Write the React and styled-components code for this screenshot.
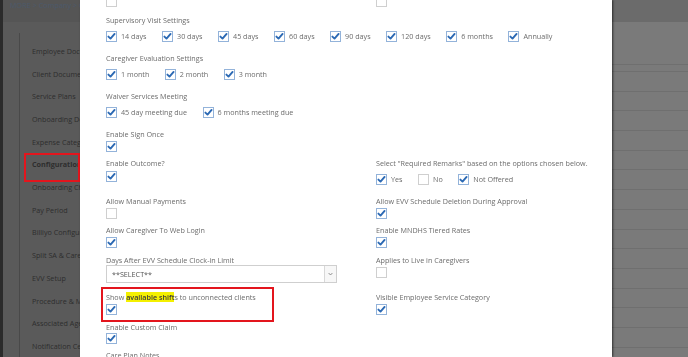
import React from "react";
import styled, { createGlobalStyle } from "styled-components";

const GlobalStyle = createGlobalStyle`
  html, body {
    margin: 0;
    padding: 0;
    width: 688px;
    height: 357px;
    overflow: hidden;
    font-family: "Open Sans", "Liberation Sans", sans-serif;
  }
`;

// background page (dimmed by the overlay)

const Page = styled.div`
  display: flex;
  width: 688px;
  height: 357px;
  overflow: hidden;
`;

const Rail = styled.div`
  width: 3px;
  flex-shrink: 0;
  background-color: #565656;
`;

const SideColumn = styled.div`
  width: 300px;
  flex-shrink: 0;
  display: flex;
  flex-direction: column;
  background-color: #b4b4b4;
`;

const Breadcrumb = styled.div`
  height: 22px;
  flex-shrink: 0;
  padding-left: 7px;
  background-color: #aaaaaa;
  font-size: 7.3px;
  line-height: 10px;
  color: #98b2d4;
`;

const SideNav = styled.nav`
  margin-top: 11px;
  margin-left: 16px;
  flex: 1;
  border-left: 1px solid #929292;
  padding-top: 6.6px;
  display: flex;
  flex-direction: column;
`;

const NavItem = styled.div`
  position: relative;
  height: 22.7px;
  display: flex;
  align-items: center;
  padding-left: 12px;
  font-size: 7.2px;
  color: #5c5c5c;
  font-weight: ${(p) => (p.$active ? 700 : 400)};
  white-space: nowrap;

  ${(p) =>
    p.$marked &&
    `
    &::after {
      content: "";
      position: absolute;
      z-index: 20;
      left: 4px;
      top: 0;
      width: 52px;
      height: 25px;
      border: 2px solid #e3151d;
    }
  `}
`;

const ContentColumn = styled.div`
  flex: 1;
  display: flex;
  flex-direction: column;
  background-color: #f4f4f4;
`;

const TopBand = styled.div`
  height: 22px;
  flex-shrink: 0;
  background-color: #d6d6d6;
`;

const TableRow = styled.div`
  height: ${(p) => p.$h}px;
  flex-shrink: 0;
  border-bottom: 1px solid #dedede;
  box-sizing: border-box;
`;

const Overlay = styled.div`
  position: fixed;
  inset: 0;
  z-index: 10;
  background-color: rgba(0, 0, 0, 0.5);
`;

// modal

const Modal = styled.div`
  position: fixed;
  z-index: 30;
  top: 0;
  bottom: 0;
  left: 80px;
  width: 532px;
  background-color: #fff;
  box-shadow: 1px 0 2px rgba(0, 0, 0, 0.6);
  overflow: hidden;
`;

const ModalBody = styled.div`
  display: flex;
  flex-direction: column;
  padding-left: 26px;
`;

const Label = styled.div`
  font-size: 7.2px;
  line-height: 10px;
  height: 10px;
  color: #6c6c6c;
  white-space: nowrap;
`;

const Highlight = styled.span`
  background-color: #f4f000;
  color: #3a3a3a;
  font-weight: 600;
`;

const Section = styled.div`
  display: flex;
  flex-direction: column;
  margin-top: ${(p) => p.$mt}px;
`;

const PairRow = styled.div`
  display: grid;
  grid-template-columns: 270px 1fr;
  align-items: start;
  margin-top: ${(p) => p.$mt}px;
`;

const Field = styled.div`
  position: relative;
  display: flex;
  flex-direction: column;
  align-items: flex-start;

  ${(p) =>
    p.$marked &&
    `
    &::after {
      content: "";
      position: absolute;
      left: -5.5px;
      top: -5px;
      width: 169px;
      height: 31px;
      border: 2px solid #e3151d;
    }
  `}
`;

const CheckRow = styled.div`
  display: flex;
  align-items: center;
  gap: 15.5px;
  margin-top: ${(p) => (p.$mt !== undefined ? p.$mt : 5.5)}px;
`;

const CheckItem = styled.label`
  display: inline-flex;
  align-items: center;
  gap: 4px;
  font-size: 7.2px;
  line-height: 11px;
  color: #6c6c6c;
  white-space: nowrap;
`;

const BoxFrame = styled.span`
  display: inline-flex;
  width: 11px;
  height: 11px;
  box-sizing: border-box;
  flex-shrink: 0;
  border: 1px solid ${(p) => (p.$checked ? "#93b3da" : "#cfcfcf")};
  background-color: #fff;
  margin-top: ${(p) => p.$mt || 0}px;
  svg {
    display: block;
  }
`;

const SelectBox = styled.div`
  width: 231px;
  height: 18px;
  box-sizing: border-box;
  border: 1px solid #cfcfcf;
  display: flex;
  align-items: center;
`;

const SelectText = styled.div`
  flex: 1;
  padding-left: 5px;
  font-size: 7.2px;
  color: #555;
`;

const SelectArrow = styled.div`
  width: 11px;
  height: 100%;
  border-left: 1px solid #d8d8d8;
  background-color: #f7f7f7;
  display: flex;
  align-items: center;
  justify-content: center;
`;

const Box = ({ checked, mt }) => (
  <BoxFrame $checked={checked} $mt={mt}>
    {checked && (
      <svg width="9" height="9" viewBox="0 0 9 9">
        <path
          d="M1.4 4.6 L3.5 6.6 L7.6 1.9"
          fill="none"
          stroke="#2b69b4"
          strokeWidth="1.9"
          strokeLinecap="round"
          strokeLinejoin="round"
        />
      </svg>
    )}
  </BoxFrame>
);

const Check = ({ label, checked = true }) => (
  <CheckItem>
    <Box checked={checked} />
    {label}
  </CheckItem>
);

const CheckSection = ({ title, items, mt }) => (
  <Section $mt={mt}>
    <Label>{title}</Label>
    <CheckRow>
      {items.map((it) => (
        <Check key={it} label={it} />
      ))}
    </CheckRow>
  </Section>
);

const navItems = [
  "Employee Documents",
  "Client Documents",
  "Service Plans",
  "Onboarding Documents",
  "Expense Categories",
  "Configuration",
  "Onboarding Checklist",
  "Pay Period",
  "Billiyo Configuration",
  "Split SA & Caregiver",
  "EVV Setup",
  "Procedure & Modifier",
  "Associated Agencies",
  "Notification Center",
];

export default function App() {
  return (
    <>
      <GlobalStyle />
      <Page>
        <Rail />
        <SideColumn>
          <Breadcrumb>MORE &gt; Company &gt; Configuration</Breadcrumb>
          <SideNav>
            {navItems.map((n) => (
              <NavItem
                key={n}
                $active={n === "Configuration"}
                $marked={n === "Configuration"}
              >
                {n}
              </NavItem>
            ))}
          </SideNav>
        </SideColumn>
        <ContentColumn>
          <TopBand />
          <TableRow $h={43} />
          <TableRow $h={7} />
          {Array.from({ length: 15 }).map((_, i) => (
            <TableRow key={i} $h={19.7} />
          ))}
        </ContentColumn>
      </Page>

      <Overlay />

      <Modal>
        <ModalBody>
          <PairRow $mt={-4}>
            <Box checked={false} />
            <Box checked={false} />
          </PairRow>

          <CheckSection
            mt={8}
            title="Supervisory Visit Settings"
            items={[
              "14 days",
              "30 days",
              "45 days",
              "60 days",
              "90 days",
              "120 days",
              "6 months",
              "Annually",
            ]}
          />
          <CheckSection
            mt={11.5}
            title="Caregiver Evaluation Settings"
            items={["1 month", "2 month", "3 month"]}
          />
          <CheckSection
            mt={11.5}
            title="Waiver Services Meeting"
            items={["45 day meeting due", "6 months meeting due"]}
          />

          <Section $mt={11.5}>
            <Label>Enable Sign Once</Label>
            <Box checked mt={2} />
          </Section>

          <PairRow $mt={6}>
            <Field>
              <Label>Enable Outcome?</Label>
              <Box checked mt={3} />
            </Field>
            <Field>
              <Label>Select "Required Remarks" based on the options chosen below.</Label>
              <CheckRow>
                <Check label="Yes" />
                <Check label="No" checked={false} />
                <Check label="Not Offered" />
              </CheckRow>
            </Field>
          </PairRow>

          <PairRow $mt={11.5}>
            <Field>
              <Label>Allow Manual Payments</Label>
              <Box checked={false} mt={2} />
            </Field>
            <Field>
              <Label>Allow EVV Schedule Deletion During Approval</Label>
              <Box checked mt={2} />
            </Field>
          </PairRow>

          <PairRow $mt={6}>
            <Field>
              <Label>Allow Caregiver To Web Login</Label>
              <Box checked mt={2} />
            </Field>
            <Field>
              <Label>Enable MNDHS Tiered Rates</Label>
              <Box checked mt={2} />
            </Field>
          </PairRow>

          <PairRow $mt={7}>
            <Field>
              <Label>Days After EVV Schedule Clock-in Limit</Label>
              <SelectBox>
                <SelectText>**SELECT**</SelectText>
                <SelectArrow>
                  <svg width="5" height="4" viewBox="0 0 5 4">
                    <path d="M0.6 1 L2.5 3 L4.4 1" fill="none" stroke="#777" strokeWidth="0.8" />
                  </svg>
                </SelectArrow>
              </SelectBox>
            </Field>
            <Field>
              <Label>Applies to Live in Caregivers</Label>
              <Box checked={false} mt={2} />
            </Field>
          </PairRow>

          <PairRow $mt={9}>
            <Field $marked>
              <Label>
                Show <Highlight>available shift</Highlight>s to unconnected clients
              </Label>
              <Box checked mt={2} />
            </Field>
            <Field>
              <Label>Visible Employee Service Category</Label>
              <Box checked mt={2} />
            </Field>
          </PairRow>

          <Section $mt={7}>
            <Label>Enable Custom Claim</Label>
            <Box checked mt={1} />
          </Section>

          <Section $mt={6}>
            <Label>Care Plan Notes</Label>
          </Section>
        </ModalBody>
      </Modal>
    </>
  );
}
